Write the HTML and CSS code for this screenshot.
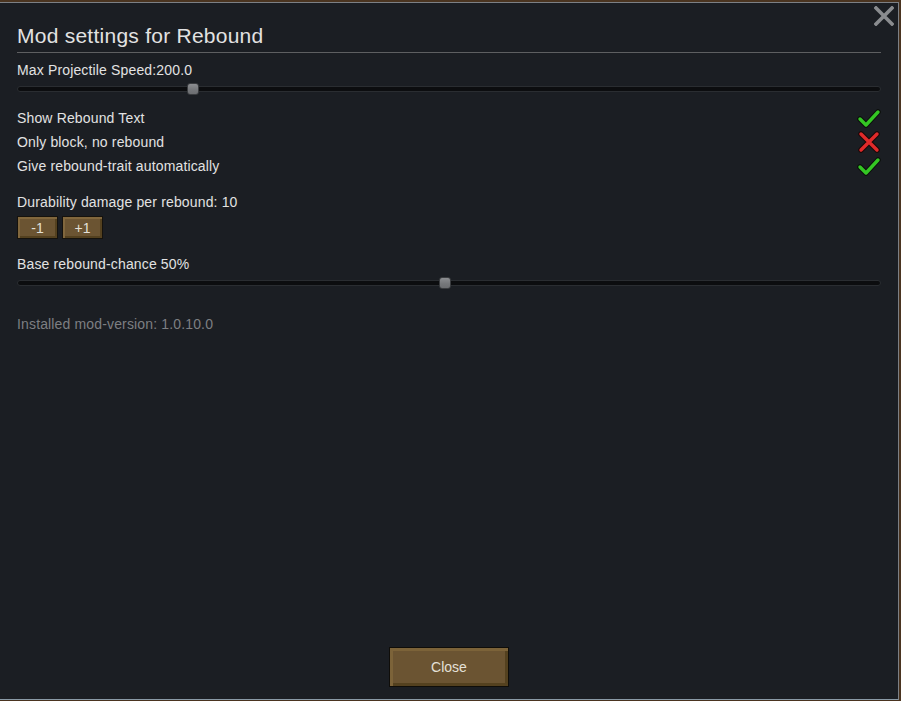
FILE: index.html
```html
<!DOCTYPE html>
<html>
<head>
<meta charset="utf-8">
<link rel="stylesheet" href="styles.css">
</head>
<body>
<div class="window">
  <button class="close-x" aria-label="Close">
    <svg width="20" height="20" viewBox="0 0 20 20"><path d="M2 2 L18 18 M18 2 L2 18" stroke="#8a8c8f" stroke-width="3.6" stroke-linecap="square"/></svg>
  </button>
  <div class="content">
    <div class="title">Mod settings for Rebound</div>
    <div class="divider"></div>
    <div class="label first">Max Projectile Speed:200.0</div>
    <div class="slider"><div class="track"></div><div class="thumb" style="left: calc(0.2 * (100% - 12px))"></div></div>
    <div class="checks">
      <div class="row"><span>Show Rebound Text</span>
        <svg class="icon" width="24" height="24" viewBox="0 0 24 24"><path d="M3 13 L9 19 L21 6" fill="none" stroke="#0b0f0b" stroke-width="5.5" stroke-linecap="round" stroke-linejoin="round"/><path d="M3 13 L9 19 L21 6" fill="none" stroke="#34c624" stroke-width="3.4" stroke-linecap="round" stroke-linejoin="round"/></svg>
      </div>
      <div class="row"><span>Only block, no rebound</span>
        <svg class="icon" width="24" height="24" viewBox="0 0 24 24"><path d="M4 4 L20 20 M20 4 L4 20" fill="none" stroke="#1a0808" stroke-width="5.5" stroke-linecap="round"/><path d="M4 4 L20 20 M20 4 L4 20" fill="none" stroke="#e02a2a" stroke-width="3.4" stroke-linecap="round"/></svg>
      </div>
      <div class="row"><span>Give rebound-trait automatically</span>
        <svg class="icon" width="24" height="24" viewBox="0 0 24 24"><path d="M3 13 L9 19 L21 6" fill="none" stroke="#0b0f0b" stroke-width="5.5" stroke-linecap="round" stroke-linejoin="round"/><path d="M3 13 L9 19 L21 6" fill="none" stroke="#34c624" stroke-width="3.4" stroke-linecap="round" stroke-linejoin="round"/></svg>
      </div>
    </div>
    <div class="label durability">Durability damage per rebound: 10</div>
    <div class="buttons">
      <button class="btn small">-1</button>
      <button class="btn small">+1</button>
    </div>
    <div class="label chance">Base rebound-chance 50%</div>
    <div class="slider"><div class="track"></div><div class="thumb" style="left: calc(0.495 * (100% - 12px))"></div></div>
    <div class="label version">Installed mod-version: 1.0.10.0</div>
    <div class="spacer"></div>
    <div class="footer"><button class="btn big">Close</button></div>
  </div>
</div>
</body>
</html>
```
FILE: styles.css
```css
html, body {
  margin: 0;
  padding: 0;
}
body {
  width: 901px;
  height: 701px;
  background: #4a3420;
  font-family: "Liberation Sans", Arial, sans-serif;
  color: #e2e2e2;
  overflow: hidden;
}
.window {
  position: relative;
  box-sizing: border-box;
  margin-top: 2px;
  width: 899px;
  height: 698px;
  background: #1b1e23;
  border-top: 1px solid #7c8085;
  border-right: 1px solid #7c8085;
  border-bottom: 1px solid #8a9aa6;
}
.close-x {
  position: absolute;
  top: 3px;
  right: 4px;
  width: 20px;
  height: 20px;
  padding: 0;
  border: 0;
  background: none;
}
.close-x svg { display: block; }
.content {
  box-sizing: border-box;
  height: 100%;
  padding: 18px 17px 12px 17px;
  display: flex;
  flex-direction: column;
}
.title {
  font-size: 21px;
  letter-spacing: 0.25px;
  line-height: 29px;
  height: 29px;
}
.divider {
  margin-top: 2px;
  height: 1px;
  width: 864px;
  background: #5e5f61;
}
.label {
  font-size: 14px;
  letter-spacing: 0.15px;
  line-height: 18px;
  height: 18px;
}
.label.first { margin-top: 8px; }
.slider {
  position: relative;
  margin-top: 3px;
  height: 14px;
  width: 864px;
}
.track {
  position: absolute;
  left: 0;
  right: 0;
  top: 4px;
  height: 6px;
  box-sizing: border-box;
  background: #0c0d0f;
  border: 1px solid #2a2d31;
  border-radius: 3px;
}
.thumb {
  position: absolute;
  top: 1px;
  width: 12px;
  height: 12px;
  box-sizing: border-box;
  background: linear-gradient(#8c8e91 0%, #7a7c7f 45%, #66686b 50%, #76787b 55%, #6c6e71 100%);
  border: 1px solid #3a3c3f;
  border-radius: 3px;
}
.checks {
  margin-top: 10px;
  display: flex;
  flex-direction: column;
  width: 864px;
}
.row {
  height: 24px;
  display: flex;
  align-items: center;
  justify-content: space-between;
  font-size: 14px;
  letter-spacing: 0.15px;
}
.row .icon { display: block; }
.label.durability { margin-top: 15px; }
.buttons {
  margin-top: 5px;
  display: flex;
  gap: 4px;
}
.btn {
  box-sizing: border-box;
  font-family: "Liberation Sans", Arial, sans-serif;
  color: #e4e0d8;
  background: #6b5432;
  border: 1px solid #15120d;
  box-shadow: inset 2px 2px 0 #81673d, inset -2px -2px 0 #54411f;
  padding: 0;
  cursor: pointer;
}
.btn.small {
  width: 41px;
  height: 23px;
  font-size: 14px;
}
.label.chance { margin-top: 16px; }
.label.version {
  margin-top: 25px;
  color: #7d7f82;
}
.spacer { flex: 1; }
.footer {
  display: flex;
  justify-content: center;
}
.btn.big {
  width: 120px;
  height: 40px;
  font-size: 14px;
  box-shadow: inset 3px 3px 0 #7c6339, inset -3px -3px 0 #54411f;
  border: 1px solid #0f0d09;
}
```
